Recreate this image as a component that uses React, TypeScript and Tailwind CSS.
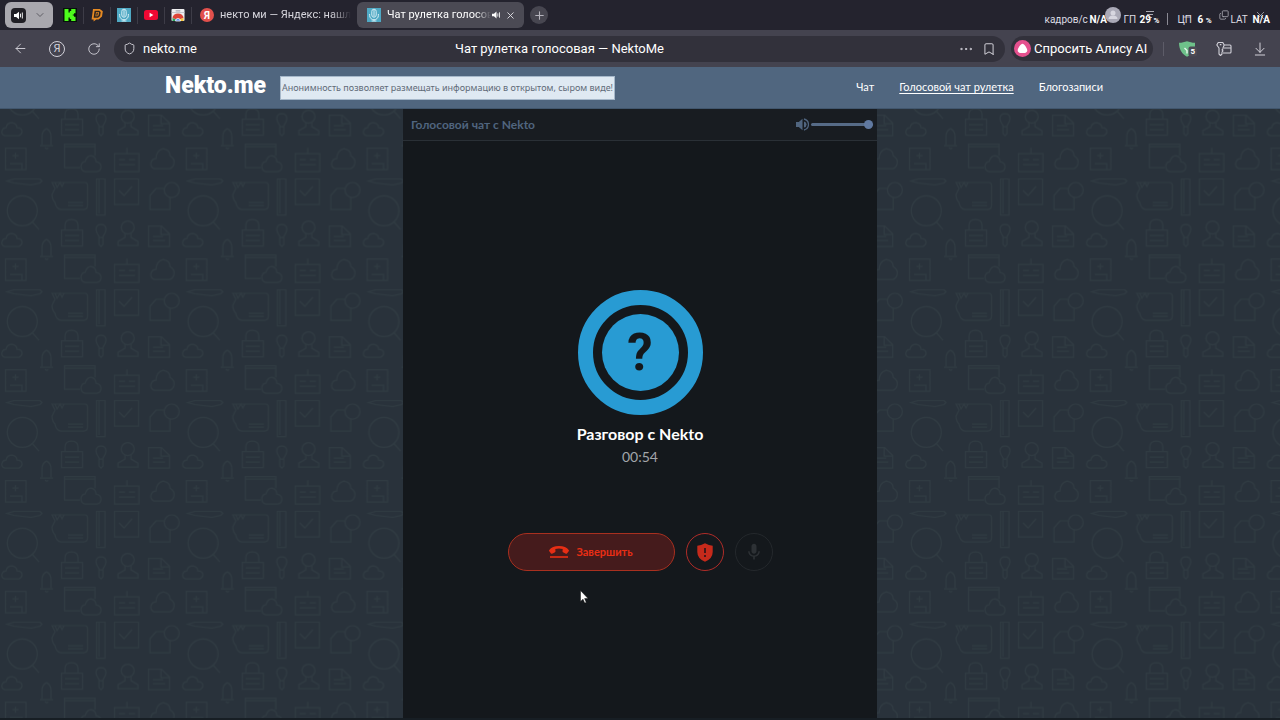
import React from "react";
import { ArrowLeft, ArrowDownToLine, Bookmark, ChevronDown, Copy, Minus, MoreHorizontal, Plus, RotateCw, Shield, X } from "lucide-react";
import { MdMic } from "react-icons/md";

function MicFavicon() {
  return (
    <svg viewBox="0 0 14 14" className="size-[14px] shrink-0" aria-hidden="true">
      <rect width="14" height="14" fill="#4fa9c4" />
      <g fill="none" stroke="#d5edf4" strokeWidth="1">
        <rect x="4.8" y="1.2" width="4.4" height="8" rx="2.2" />
        <path d="M2.6 6v1.4a4.4 4.4 0 0 0 8.8 0V6M7 11.6V13M4.6 13h4.8M7 2v6.400" />
      </g>
    </svg>
  );
}

function SpeakerGlyph({ className }: { className?: string }) {
  return (
    <svg viewBox="0 0 12 10" className={className} aria-hidden="true">
      <path d="M0 3.200h2.600L6 .4v9.200L2.600 6.800H0z" fill="currentColor" />
      <path d="M7.800 2.800v4.400M10 1.400v7.200" stroke="currentColor" strokeWidth="1.100" fill="none" />
    </svg>
  );
}

const pins = [
  {
    label: "Kick",
    icon: (
      <svg viewBox="0 0 14 14" className="size-[14px]">
        <rect width="14" height="14" fill="#07120a" />
        <path d="M1.500 1h4v3.500h1.300V3h1.400V1H12.500v4.200H11v1.200H9.800v1.200H11v1.200h1.500V13H8.200v-2H6.800V9.500H5.500V13h-4z" fill="#4dfb1c" />
      </svg>
    ),
  },
  {
    label: "DonationAlerts",
    icon: (
      <svg viewBox="0 0 14 14" className="size-[14px]">
        <path d="M3 1h6.800L12.800 3.200 12 8.600 8.600 11.400H6.200L3.600 13.400V11.400H1.600z" fill="#e68a23" />
        <path d="M4.600 2.800h4.600l1.500 1.200-.6 4-2.100 1.800H3.600z" fill="#2c2420" />
        <path d="M6 4h2.400l.6.600-.4 2.600-1 1H5.400z" fill="#e68a23" />
        <path d="M7.300 4.600 6.800 7.600" stroke="#2c2420" strokeWidth="1.200" />
      </svg>
    ),
  },
  { label: "NektoMe", icon: <MicFavicon /> },
  {
    label: "YouTube",
    icon: (
      <svg viewBox="0 0 14 14" className="size-[14px]">
        <rect y="2" width="14" height="10" rx="2.500" fill="#f00833" />
        <path d="M5.600 4.800v4.400L9.400 7z" fill="#fff" />
      </svg>
    ),
  },
  {
    label: "Chrome Web Store",
    icon: (
      <svg viewBox="0 0 14 14" className="size-[14px]">
        <rect x=".5" y="1" width="13" height="12" rx="1" fill="#eeeef0" />
        <path d="M.5 4.500h13" stroke="#b9bac2" strokeWidth=".8" />
        <rect x="4.500" y="2.200" width="5" height="1.200" rx=".6" fill="#a5a6b0" />
        <path d="M1.500 10a5.500 4.500 0 0 1 11 0L10 11H4z" fill="#dc4437" />
        <path d="M1.500 10 5 11.500V13H1.500z" fill="#2c9f57" />
        <path d="M9 11l3.500-1v3H9z" fill="#f6c33b" />
        <path d="M4.500 13a2.500 2.500 0 0 1 5 0z" fill="#4a80e8" stroke="#fff" strokeWidth=".8" />
      </svg>
    ),
  },
];

function TabStrip() {
  return (
    <div className="relative flex h-[30px] items-center bg-[#24232e] pl-[5px]">
      <button aria-label="Звук вкладок" className="flex h-[26px] w-12 shrink-0 items-center gap-2 rounded-md bg-[#a9a8ae] pl-[6px]">
        <span className="flex size-[15px] items-center justify-center rounded-[4px] bg-[#201f25] text-white">
          <SpeakerGlyph className="h-[9px] w-[10px]" />
        </span>
        <ChevronDown className="size-3 text-[#5e5d64]" strokeWidth={2} />
      </button>
      <div className="ml-1 flex items-center">
        {pins.map((p) => (
          <button key={p.label} aria-label={p.label} className="flex h-[17px] w-[27px] items-center justify-center border-r border-[#3d3c47]">
            {p.icon}
          </button>
        ))}
      </div>
      <button className="ml-2 flex w-[154px] items-center gap-[6px] text-[11px] text-[#d6d5dc]">
        <span className="flex size-[14px] shrink-0 items-center justify-center rounded-full bg-[#e2504c] text-[10px] font-bold text-white">Я</span>
        <span className="overflow-hidden whitespace-nowrap [mask-image:linear-gradient(to_right,black_85%,transparent)]">некто ми — Яндекс: нашл</span>
      </button>
      <div className="ml-[3px] flex h-[26px] w-[167px] items-center rounded-md bg-[#4b4a54] pl-[10px]">
        <button className="flex w-[124px] items-center gap-[6px] text-[11px] text-white">
          <MicFavicon />
          <span className="overflow-hidden whitespace-nowrap [mask-image:linear-gradient(to_right,black_85%,transparent)]">Чат рулетка голосов</span>
        </button>
        <button aria-label="Выключить звук" className="ml-px text-white"><SpeakerGlyph className="h-2 w-[9px]" /></button>
        <button aria-label="Закрыть вкладку" className="ml-1 text-[#e0dfe5]"><X className="size-[11px]" strokeWidth={2} /></button>
      </div>
      <button aria-label="Новая вкладка" className="ml-[6px] flex size-[18px] items-center justify-center rounded-full bg-[#474650] text-[#b5b4bd]">
        <Plus className="size-[13px]" strokeWidth={2} />
      </button>
      <div className="ml-auto flex pr-[1px] text-[#aaa9b2]">
        <button aria-label="Профиль" className="flex w-[37px] items-center justify-center">
          <svg viewBox="0 0 16 16" className="size-4"><circle cx="8" cy="8" r="8" fill="#aaa9b7" /><circle cx="8" cy="6" r="2.500" fill="#d7d6e0" /><path d="M3.500 12a4.500 3.500 0 0 1 9 0z" fill="#d7d6e0" /></svg>
        </button>
        <button aria-label="Меню" className="flex w-[37px] items-center justify-center">
          <svg viewBox="0 0 10 10" className="size-[10px]" stroke="currentColor"><path d="M1 1.500h8M2 4.500h6M3 7.500h4" /></svg>
        </button>
        <button aria-label="Свернуть" className="flex w-[37px] items-center justify-center pt-1"><Minus className="size-3" strokeWidth={2} /></button>
        <button aria-label="Восстановить" className="flex w-[37px] items-center justify-center"><Copy className="size-[10px] -scale-y-100" strokeWidth={2} /></button>
        <button aria-label="Закрыть" className="flex w-[37px] items-center justify-center"><X className="size-[13px]" strokeWidth={1.500} /></button>
      </div>
      <div className="pointer-events-none absolute top-3 right-[10px] flex h-[14px] items-center text-[10px] whitespace-nowrap text-[#dddce3]">
        <span className="w-[45px]">кадров/с</span>
        <b className="w-[34px] text-white">N/A</b>
        <span className="w-4">ГП</span>
        <b className="w-[27px] text-white">29 <span className="text-[8px]">%</span></b>
        <span className="mr-[10px] h-3 w-px bg-[#8b8a94]" />
        <span className="w-5">ЦП</span>
        <b className="w-[33px] text-white">6 <span className="text-[8px]">%</span></b>
        <span className="w-[22px]">LAT</span>
        <b className="text-white">N/A</b>
      </div>
    </div>
  );
}

function Toolbar() {
  return (
    <div className="flex h-[37px] items-center bg-[#44434f] text-[#d2d1d9]">
      <button aria-label="Назад" className="ml-3 flex w-4 justify-center"><ArrowLeft className="size-[15px]" strokeWidth={1.500} /></button>
      <button aria-label="Яндекс" className="ml-[21px] flex size-4 items-center justify-center rounded-full border border-[#d2d1d9] text-[11px] leading-none">Я</button>
      <button aria-label="Обновить" className="ml-[21px] flex w-4 justify-center"><RotateCw className="size-[14px]" strokeWidth={1.500} /></button>
      <div className="relative ml-[12px] flex h-[26px] flex-1 items-center rounded-full bg-[#32313b] px-[9px]">
        <Shield className="size-[13px]" strokeWidth={1.700} />
        <input aria-label="Адрес" defaultValue="nekto.me" className="ml-[7px] w-24 bg-transparent text-[13px] text-white outline-none" />
        <span className="pointer-events-none absolute inset-x-0 text-center text-[13px] text-white">Чат рулетка голосовая — NektoMe</span>
        <button aria-label="Ещё" className="ml-auto"><MoreHorizontal className="size-4" strokeWidth={1.500} /></button>
        <button aria-label="В закладки" className="ml-2"><Bookmark className="size-[14px]" strokeWidth={1.700} /></button>
      </div>
      <button className="ml-[6px] flex h-[25px] w-[142px] items-center gap-[3px] rounded-full bg-[#32313b] pl-[3px] text-[13px] whitespace-nowrap text-white">
        <svg viewBox="0 0 17 17" className="size-[17px] shrink-0"><circle cx="8.500" cy="8.500" r="8.500" fill="#e5508e" /><path d="M8.500 3.800c1.700 0 4.800 4.700 4.800 6.600 0 2.100-2.700 2.700-4.800 2.700s-4.800-.6-4.800-2.700c0-1.900 3.100-6.600 4.800-6.600z" fill="#fff" /></svg>
        Спросить Алису AI
      </button>
      <span className="ml-[10px] h-[14px] w-px bg-[#5d5c68]" />
      <button aria-label="Защита" className="ml-[15px]">
        <svg viewBox="0 0 18 16" className="h-4 w-[18px]">
          <path d="M0 1.800C3 1.600 5.500 1 8 .2c2.500.8 5 1.400 8 1.600v4C15.800 10.500 12 14 8 15.800 3.500 13.500 0 9 0 1.800z" fill="#6ec18a" />
          <path d="m5.500 7 2.500 2.500v3" stroke="#e9f5ec" strokeWidth="1.400" fill="none" />
          <rect x="9.500" y="5.500" width="8.500" height="10" rx="2" fill="#4b4a55" />
          <text x="11.600" y="13.300" fontSize="8" fontWeight="700" fill="#fff">5</text>
        </svg>
      </button>
      <button aria-label="Пароли и карты" className="ml-[19px]">
        <svg viewBox="0 0 16 16" className="size-4" fill="none" stroke="currentColor" strokeWidth="1.100" strokeLinejoin="round">
          <path d="M2.200 1.500h4.600L8.200 4 7 7v.8l-1 1 1 1-1 1.200V13l-1.500 1.500L3 13V7L.8 4z" /><path d="M3.800 3.600h1.600M8.200 4H14a1 1 0 0 1 1 1v6a1 1 0 0 1-1 1H7M8 7h7" />
        </svg>
      </button>
      <button aria-label="Загрузки" className="mr-3 ml-5"><ArrowDownToLine className="size-4" strokeWidth={1.500} /></button>
    </div>
  );
}

function Doodles() {
  return (
    <svg className="absolute inset-0 size-full" aria-hidden="true">
      <defs>
        <pattern id="doodles" width="180.800" height="110.800" y="67.500" patternUnits="userSpaceOnUse">
          <g fill="none" stroke="#303b42" strokeWidth="1.200">
            <path d="M7 4.500 14 2.500h26l2 2-2 2-9 2-17-2zM32 45l7 8" />
            <circle cx="22.300" cy="34.300" r="15" />
            <path d="M52 6h33q2.500 0 2.500 3v20q0 4-4 4H61q-5-1-6-7-3-3-3-8l3-6zM55 6l2 5 3-5 2 4 2-4M68 26h15M68 29h15" />
            <path d="M96.500 2.500h8.500v36h-8.500zM99 3v34" />
            <path d="M114.500 2.500h24v25.500h-24zM119 14l5 5 8-9" />
            <path d="M164 12h-8l-6 7v14h20V21" />
            <circle cx="171.700" cy="13.500" r="7.500" />
            <path d="M61.500 53.500h21v16h-21zM65 53v-4q0-6 6.500-6t6.500 6v4M65 59h14M65 64h14" />
            <path d="M101 48q5 0 5 5 0 3-3 7v8l-2 2-2-2v-8q-3-4-3-7 0-5 5-5zM99 61h4" />
            <circle cx="127.700" cy="51" r="6.500" />
            <path d="M125 57v4l-7 4v4h20v-4l-7-4v-4" />
            <path d="M148.500 49.500h13l8 8V70h-21zM161 50v8h8M153 60h10M153 64h12" />
            <path d="M5 70q-4-1-3-5 1-3 4-3 1-5 6-5 5 1 5 5 5 0 5 4 0 3-3 4z" />
            <path d="M40 80h13M42 79v-8q0-6 4.500-8 4.500 2 4.500 8v8M45 82q2 2 3 0" />
            <path d="M5.500 82.500h20.500V104H5.500zM10 98h12v6M15.500 87v6m-3-3h6" />
            <path d="M80 102H64.500V78.500H95V90M64 81h31" />
            <path d="M85 106q-4-1-4-6 1-4 4-4 2-6 6-6 5 1 5 6 5 1 5 5 0 4-4 5z" />
            <path d="M114.500 88h24.500v18h-24.500zM127 82v6M119 94h6M129 94h6M119 99h16" />
            <path d="M154 103q-4-2-3-6 1-4 5-4 0-8 7-10 7 1 7 7 5 3 4 8-1 4-4 5z" />
          </g>
        </pattern>
      </defs>
      <rect width="100%" height="100%" fill="url(#doodles)" />
    </svg>
  );
}

function SiteHeader() {
  return (
    <header className="h-[42px] border-b border-[#41566d] bg-[#50667f]">
      <div className="mx-auto flex h-full max-w-[950px] items-center pr-3">
        <a href="#home" className="w-[102px] pb-1 font-['Roboto',sans-serif] text-[23px] leading-6 font-black text-white">Nekto.me</a>
        <p className="ml-[13px] flex h-6 w-[335px] items-center justify-center border border-[#a6b8ca] bg-[#dfe9f2] font-['Noto_Sans',sans-serif] text-[9px] whitespace-nowrap text-[#5f6b78]">
          Анонимность позволяет размещать информацию в открытом, сыром виде!
        </p>
        <nav className="ml-auto flex gap-[25px] text-[11px] text-white">
          <a href="#chat">Чат</a>
          <a href="#voice" className="underline underline-offset-2">Голосовой чат рулетка</a>
          <a href="#blog">Блогозаписи</a>
        </nav>
      </div>
    </header>
  );
}

function VoicePanel() {
  return (
    <section className="relative mx-auto flex w-full max-w-[474px] flex-1 flex-col bg-[#14181c]">
      <div className="flex h-8 items-center justify-between border-b border-[#2a3036] bg-[#181c21] pr-1 pl-2 text-[#50657f]">
        <h1 className="text-[12px] font-bold">Голосовой чат с Nekto</h1>
        <label className="flex items-center gap-[2px]">
          <svg viewBox="0 0 13 13" className="size-[13px]" role="img" aria-label="Громкость">
            <path d="M0 4h2.800L6.500.8v11.400L2.800 9H0z" fill="currentColor" />
            <path d="M8 3.500v6q2.500-.5 2.500-3T8 3.500z" fill="currentColor" />
            <path d="M8 1q4.500 1.200 4.500 5.500T8 12" fill="none" stroke="currentColor" strokeWidth="1.300" />
          </svg>
          <input type="range" defaultValue={100} className="h-[9px] w-[62px] appearance-none bg-transparent [&::-webkit-slider-runnable-track]:h-[3px] [&::-webkit-slider-runnable-track]:rounded-full [&::-webkit-slider-runnable-track]:bg-[#566b87] [&::-webkit-slider-thumb]:-mt-[3px] [&::-webkit-slider-thumb]:size-[9px] [&::-webkit-slider-thumb]:appearance-none [&::-webkit-slider-thumb]:rounded-full [&::-webkit-slider-thumb]:bg-[#6079a0]" />
        </label>
      </div>
      <div className="flex flex-1 flex-col items-center justify-center pt-[2px]">
        <div className="flex size-[125px] items-center justify-center rounded-full border-[15px] border-[#289bd3]">
          <div className="flex size-[77px] items-center justify-center rounded-full bg-[#289bd3] font-['Roboto',sans-serif] text-[51px] leading-none font-bold text-[#14181c]">?</div>
        </div>
        <h2 className="mt-[7px] text-[16px] leading-6 font-bold text-white">Разговор с Nekto</h2>
        <p className="text-[14px] leading-[22px] text-[#a3a6aa]">00:54</p>
        <div className="mt-[65px] flex gap-[11px]">
          <button className="flex h-[38px] w-[167px] items-center justify-center gap-[7px] rounded-full border border-[#a9301f] bg-[#451b1c] text-[11px] font-bold text-[#e82e14]">
            <svg viewBox="0 0 20 12" className="h-3 w-5" fill="currentColor" aria-hidden="true">
              <path d="M10 0C5.500 0 2 1.600.3 4q-.5.700 0 1.300L2 7.500q.5.600 1.100.2L6 6.200q.6-.4.500-1L6.300 3Q10 1.800 13.700 3l-.2 2.200q-.1.600.5 1l2.900 1.500q.6.400 1.100-.2l1.700-2.200q.5-.6 0-1.300C18 1.600 14.500 0 10 0z" />
              <rect x="1" y="10.200" width="18" height="1.600" />
            </svg>
            Завершить
          </button>
          <button aria-label="Пожаловаться" className="flex size-[38px] items-center justify-center rounded-full border border-[#b02c28] text-[#c62a1b]">
            <svg viewBox="0 0 16 19" className="h-[19px] w-4">
              <path d="M8 .3q4 2.200 7.700 2.500V9q0 6.500-7.700 9.800Q.3 15.500.3 9V2.800Q4 2.500 8 .3z" fill="currentColor" />
              <path d="M8 5v5M8 12v2" stroke="#401719" strokeWidth="1.900" />
            </svg>
          </button>
          <button aria-label="Микрофон" className="flex size-[38px] items-center justify-center rounded-full border border-[#24282c] text-[#2d3135]">
            <MdMic className="size-5" />
          </button>
        </div>
      </div>
    </section>
  );
}

export default function App() {
  return (
    <div className="relative flex min-h-screen flex-col overflow-hidden bg-[#29323b] font-['Lato',sans-serif]">
      <div className="font-['Roboto',sans-serif]">
        <TabStrip />
        <Toolbar />
      </div>
      <SiteHeader />
      <main className="relative flex flex-1 flex-col border-b-2 border-[#171e24]">
        <Doodles />
        <VoicePanel />
      </main>
      <svg viewBox="0 0 10 14" className="pointer-events-none absolute top-[590px] left-[580px] h-[14px] w-[10px]" aria-hidden="true">
        <path d="M.5.500v11l2.500-2.300 1.700 3.900 1.600-.7-1.700-3.800h3.500z" fill="#fff" stroke="#111" strokeWidth=".5" />
      </svg>
    </div>
  );
}
